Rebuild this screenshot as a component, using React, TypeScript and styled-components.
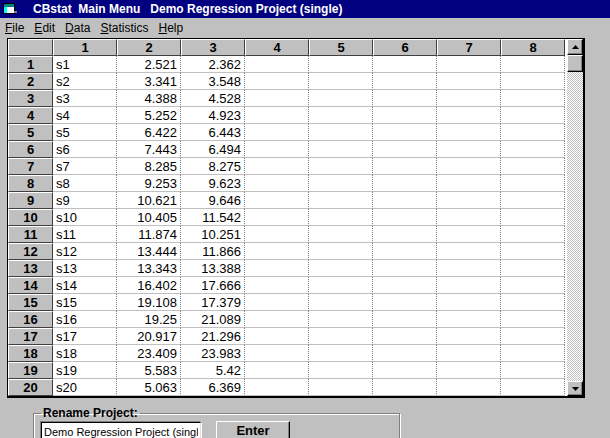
import React from "react";
import styled, { createGlobalStyle } from "styled-components";

const GlobalStyle = createGlobalStyle`
  html, body {
    margin: 0;
    padding: 0;
    background: #c0c0c0;
    overflow: hidden;
  }
`;

const Window = styled.div`
  width: 610px;
  height: 438px;
  display: flex;
  flex-direction: column;
  background: #c0c0c0;
  font-family: "Liberation Sans", Arial, sans-serif;
  overflow: hidden;
`;

const TitleBar = styled.div`
  height: 18px;
  flex: none;
  display: flex;
  align-items: center;
  padding-left: 3px;
  background: #000080;
`;

const TitleText = styled.span`
  margin-left: 14px;
  color: #fff;
  font-weight: bold;
  font-size: 12px;
  white-space: pre;
`;

const MenuBar = styled.div`
  height: 20px;
  flex: none;
  display: flex;
  align-items: center;
  gap: 10px;
  padding-left: 5px;
  font-size: 12px;
  color: #000;
`;

const MenuItem = styled.span`
  & u {
    text-decoration: underline;
  }
`;

const GridFrame = styled.div`
  flex: none;
  margin-left: 7px;
  width: 578px;
  height: 360px;
  box-sizing: border-box;
  display: flex;
  border-top: 1px solid #000;
  border-left: 1px solid #000;
  border-right: 2px solid #000;
  border-bottom: 2px solid #000;
  background: #fff;
`;

const Sheet = styled.div`
  display: grid;
  grid-template-columns: 45px repeat(8, 64px);
  grid-auto-rows: 17px;
  align-content: start;
`;

const HeadCell = styled.div`
  box-sizing: border-box;
  background: #c0c0c0;
  border-top: 1px solid #fff;
  border-left: 1px solid #fff;
  border-right: 1px solid #404040;
  border-bottom: 1px solid #404040;
  display: flex;
  align-items: center;
  justify-content: center;
  font-weight: bold;
  font-size: 13px;
  color: #000;
`;

const DataCell = styled.div<{ $align: "left" | "right" }>`
  box-sizing: border-box;
  border-right: 1px dotted #808080;
  border-bottom: 1px solid #c0c0c0;
  padding: 0 3px;
  display: flex;
  align-items: center;
  justify-content: ${(p) => (p.$align === "right" ? "flex-end" : "flex-start")};
  font-size: 13px;
  color: #000;
  white-space: nowrap;
`;

const Spacer = styled.div`
  width: 2px;
  flex: none;
`;

const ScrollBar = styled.div`
  width: 16px;
  flex: none;
  display: flex;
  flex-direction: column;
`;

const ScrollButton = styled.div<{ $h: number }>`
  height: ${(p) => p.$h}px;
  flex: none;
  box-sizing: border-box;
  background: #c0c0c0;
  border-top: 1px solid #fff;
  border-left: 1px solid #fff;
  border-right: 1px solid #000;
  border-bottom: 1px solid #000;
  box-shadow: inset -1px -1px 0 #808080;
  display: flex;
  align-items: center;
  justify-content: center;
`;

const Track = styled.div`
  flex: 1;
  background: repeating-conic-gradient(#c0c0c0 0% 25%, #fff 0% 50%) 0 0 / 2px 2px;
`;

const Footer = styled.div`
  flex: 1;
  padding: 8px 0 0 33px;
`;

const GroupBox = styled.fieldset`
  margin: 0;
  width: 367px;
  height: 60px;
  box-sizing: border-box;
  border: 1px solid #808080;
  box-shadow: inset 1px 1px 0 #fff, 1px 1px 0 #fff;
  padding: 0 0 0 7px;
  display: flex;
  align-items: flex-start;
  gap: 15px;
`;

const Legend = styled.legend`
  margin-left: 0;
  padding: 0 2px;
  font-weight: bold;
  font-size: 12px;
  color: #000;
`;

const TextBox = styled.input`
  margin-top: 2px;
  width: 160px;
  height: 20px;
  box-sizing: border-box;
  padding: 0 2px;
  border-top: 1px solid #000;
  border-left: 1px solid #000;
  border-right: 1px solid #dfdfdf;
  border-bottom: 1px solid #dfdfdf;
  box-shadow: -1px -1px 0 #808080, 1px 1px 0 #fff;
  background: #fff;
  font-family: "Liberation Sans", Arial, sans-serif;
  font-size: 11px;
  color: #000;
  outline: none;
`;

const Button = styled.button`
  margin-top: 1px;
  width: 74px;
  height: 23px;
  box-sizing: border-box;
  background: #c0c0c0;
  border-top: 1px solid #fff;
  border-left: 1px solid #fff;
  border-right: 1px solid #000;
  border-bottom: 1px solid #000;
  box-shadow: inset -1px -1px 0 #808080;
  font-family: "Liberation Sans", Arial, sans-serif;
  font-weight: bold;
  font-size: 13px;
  color: #000;
  padding: 0 0 4px;
`;

const AppIcon = () => (
  <svg width="16" height="14" viewBox="0 0 16 14">
    <rect x="0.5" y="1.5" width="11" height="10" fill="#fff" stroke="#000" />
    <rect x="1" y="2" width="10" height="3" fill="#008080" />
    <rect x="1" y="5" width="3" height="6" fill="#00ffff" />
    <path d="M11 9 h3 v2 h-3 z" fill="#808080" />
  </svg>
);

const Arrow = ({ down }: { down?: boolean }) => (
  <svg width="7" height="4" viewBox="0 0 7 4">
    <path d={down ? "M0 0 H7 L3.5 4 Z" : "M3.5 0 L7 4 H0 Z"} fill="#000" />
  </svg>
);

const rows: [string, string, string][] = [
  ["s1", "2.521", "2.362"],
  ["s2", "3.341", "3.548"],
  ["s3", "4.388", "4.528"],
  ["s4", "5.252", "4.923"],
  ["s5", "6.422", "6.443"],
  ["s6", "7.443", "6.494"],
  ["s7", "8.285", "8.275"],
  ["s8", "9.253", "9.623"],
  ["s9", "10.621", "9.646"],
  ["s10", "10.405", "11.542"],
  ["s11", "11.874", "10.251"],
  ["s12", "13.444", "11.866"],
  ["s13", "13.343", "13.388"],
  ["s14", "16.402", "17.666"],
  ["s15", "19.108", "17.379"],
  ["s16", "19.25", "21.089"],
  ["s17", "20.917", "21.296"],
  ["s18", "23.409", "23.983"],
  ["s19", "5.583", "5.42"],
  ["s20", "5.063", "6.369"],
];

const cols = [1, 2, 3, 4, 5, 6, 7, 8];

const App: React.FC = () => {
  return (
    <>
      <GlobalStyle />
      <Window>
        <TitleBar>
          <AppIcon />
          <TitleText>CBstat  Main Menu   Demo Regression Project (single)</TitleText>
        </TitleBar>
        <MenuBar>
          <MenuItem><u>F</u>ile</MenuItem>
          <MenuItem><u>E</u>dit</MenuItem>
          <MenuItem><u>D</u>ata</MenuItem>
          <MenuItem><u>S</u>tatistics</MenuItem>
          <MenuItem><u>H</u>elp</MenuItem>
        </MenuBar>
        <GridFrame>
          <Sheet>
            <HeadCell />
            {cols.map((c) => (
              <HeadCell key={c}>{c}</HeadCell>
            ))}
            {rows.map((r, i) => (
              <React.Fragment key={i}>
                <HeadCell>{i + 1}</HeadCell>
                <DataCell $align="left">{r[0]}</DataCell>
                <DataCell $align="right">{r[1]}</DataCell>
                <DataCell $align="right">{r[2]}</DataCell>
                {cols.slice(3).map((c) => (
                  <DataCell key={c} $align="left" />
                ))}
              </React.Fragment>
            ))}
          </Sheet>
          <Spacer />
          <ScrollBar>
            <ScrollButton $h={16}>
              <Arrow />
            </ScrollButton>
            <ScrollButton $h={17} />
            <Track />
            <ScrollButton $h={15}>
              <Arrow down />
            </ScrollButton>
          </ScrollBar>
        </GridFrame>
        <Footer>
          <GroupBox>
            <Legend>Rename Project:</Legend>
            <TextBox readOnly defaultValue="Demo Regression Project (single)" />
            <Button>Enter</Button>
          </GroupBox>
        </Footer>
      </Window>
    </>
  );
};

export default App;
